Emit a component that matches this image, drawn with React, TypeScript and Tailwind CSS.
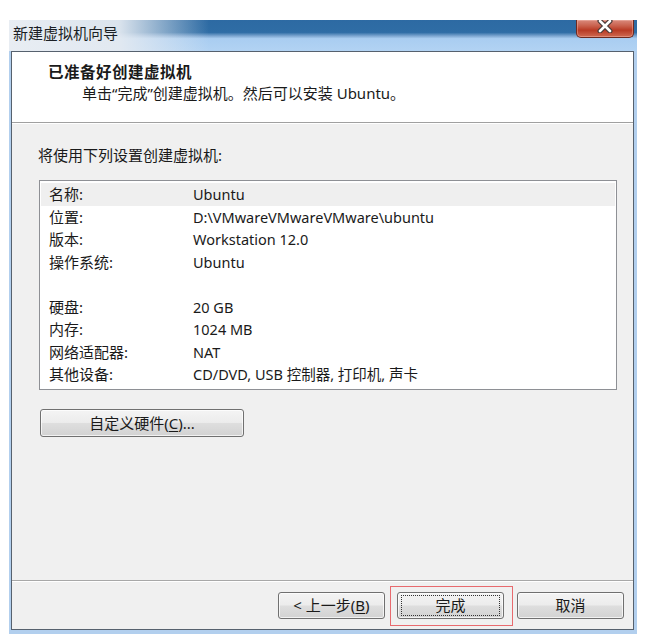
const rows: [string, string][] = [
  ["名称:", "Ubuntu"],
  ["位置:", "D:\\VMwareVMwareVMware\\ubuntu"],
  ["版本:", "Workstation 12.0"],
  ["操作系统:", "Ubuntu"],
  ["", ""],
  ["硬盘:", "20 GB"],
  ["内存:", "1024 MB"],
  ["网络适配器:", "NAT"],
  ["其他设备:", "CD/DVD, USB 控制器, 打印机, 声卡"],
]

const btn =
  "flex h-[27px] w-[107px] items-center justify-center rounded-[3px] border border-[#707070] bg-[linear-gradient(to_bottom,#f4f4f4_0%,#ececec_48%,#dedede_52%,#d2d2d2_100%)] shadow-[inset_0_0_0_1px_rgba(255,255,255,0.7)] text-[15px] text-[#1a1a1a]"

function CloseButton() {
  return (
    <div className="mr-[3px] flex h-[18px] w-[58px] items-center justify-center overflow-hidden rounded-b-[5px] border border-t-0 border-[#6e2a20] bg-[linear-gradient(to_bottom,#d98a7c_0%,#c9604c_35%,#b83a24_60%,#cf6a52_100%)] shadow-[inset_0_0_0_1px_rgba(255,210,200,0.35)]">
      <svg width="18" height="14" viewBox="0 0 18 14" className="-mt-[5px]">
        <path d="M4 2 L14 12 M14 2 L4 12" stroke="#4a3a38" strokeWidth="5" strokeLinecap="round" />
        <path d="M4 2 L14 12 M14 2 L4 12" stroke="#ffffff" strokeWidth="2.6" strokeLinecap="round" />
      </svg>
    </div>
  )
}

export default function App() {
  return (
    <div className="min-h-[643px] w-[652px] bg-white pl-[9px] pt-[20px] font-['Noto_Sans','Noto_Sans_CJK_SC',sans-serif] text-[#1a1a1a]">
      <div className="flex h-[614px] w-[628px] flex-col bg-[#b2cfee]">
        {/* title bar */}
        <div className="relative flex h-[31px] items-start justify-between bg-[linear-gradient(to_bottom,#2d6aa3_0%,#2f6da5_40%,#7fa8d2_52%,#a9cdf1_60%,#b2d3f3_100%)]">
          <div className="absolute inset-0 bg-[linear-gradient(to_right,rgba(232,237,243,1)_0px,rgba(228,234,241,0.95)_110px,rgba(228,234,241,0)_200px)]" />
          <span className="relative pl-[4px] pt-[2px] text-[15px] leading-[22px] text-[#1b1f25]">新建虚拟机向导</span>
          <div className="relative">
            <CloseButton />
          </div>
        </div>

        <div className="flex flex-1 flex-col pb-[4px] pl-[2px] pr-[3px]">
          <div className="flex flex-1 flex-col border border-[#56616e] bg-[#f0f0f0]">
            {/* header */}
            <div className="h-[71px] border-b border-[#a0a0a0] bg-white pl-[36px] pt-[10px]">
              <div className="text-[15.5px] font-bold leading-[20px] tracking-[0.5px]">已准备好创建虚拟机</div>
              <div className="mt-[1px] pl-[34px] text-[15px] leading-[20px]">
                单击“完成”创建虚拟机。然后可以安装 Ubuntu。
              </div>
            </div>

            {/* body */}
            <div className="flex flex-1 flex-col border-t border-white pl-[26px] pt-[21px]">
              <div className="text-[15px] leading-[20px]">将使用下列设置创建虚拟机:</div>
              <div className="ml-[1px] mt-[15px] h-[210px] w-[578px] border border-[#8e9095] bg-white px-[1px] pt-[2px]">
                {rows.map(([k, v], i) => (
                  <div
                    key={i}
                    className={`grid h-[22.5px] grid-cols-[144px_1fr] items-center pl-[8px] leading-[22px] ${
                      i === 0 ? "bg-[#efefef]" : ""
                    }`}
                  >
                    <span className="text-[15px]">{k}</span>
                    <span className="text-[14.5px]">{v}</span>
                  </div>
                ))}
              </div>
              <button className={`${btn} ml-[2px] mt-[19px] h-[28px] w-[204px]`}>
                自定义硬件(<span className="underline underline-offset-2">C</span>)...
              </button>
            </div>

            {/* footer */}
            <div className="flex h-[49px] items-start justify-end gap-[12px] border-t border-[#a8a8a8] pr-[9px] pt-[11px] shadow-[inset_0_1px_0_#ffffff]">
              <button className={btn}>
                &lt; 上一步(<span className="underline underline-offset-2">B</span>)
              </button>
              <div className="relative mr-[1px]">
                <span className="pointer-events-none absolute -bottom-[7px] -left-[7px] -right-[9px] -top-[6px] border-[1.5px] border-[#e86a6e]" />
                <button className={`${btn} w-[105px] border-[#3c7fb1] shadow-[inset_0_0_0_1px_rgba(150,215,245,0.9)]`}>
                  <span className="flex h-[21px] w-[99px] items-center justify-center border border-dotted border-[#333]">完成</span>
                </button>
              </div>
              <button className={btn}>取消</button>
            </div>
          </div>
        </div>
      </div>
    </div>
  )
}
